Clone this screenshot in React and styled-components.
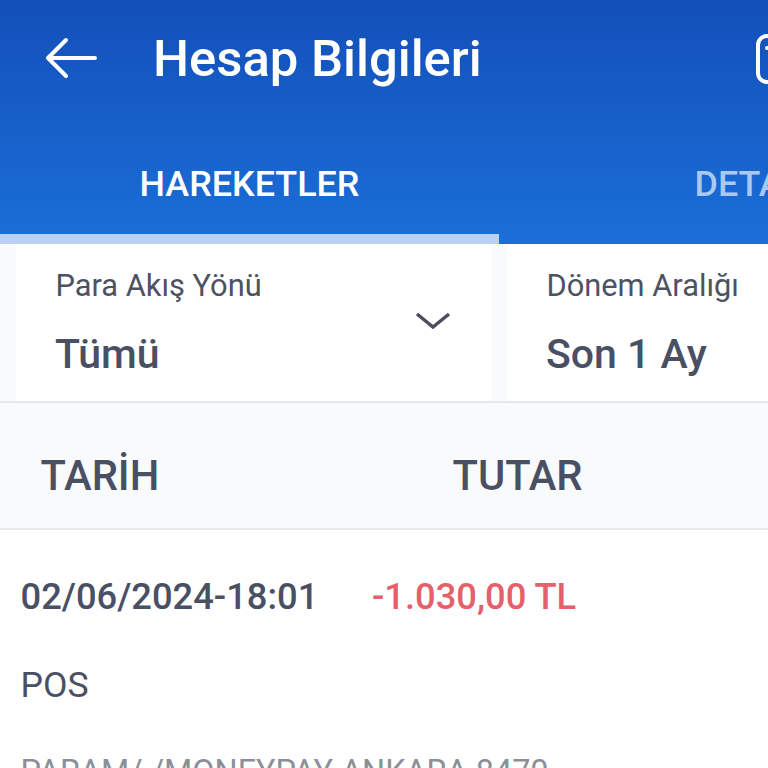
import React from 'react';
import styled, { createGlobalStyle } from 'styled-components';

const GlobalStyle = createGlobalStyle`
    html, body {
        margin: 0;
        padding: 0;
        width: 768px;
        height: 768px;
        overflow: hidden;
        background: #fff;
        font-family: Roboto, "Liberation Sans", sans-serif;
    }
`;

const Screen = styled.div`
    width: 768px;
    height: 768px;
    overflow: hidden;
`;

const Header = styled.header`
    width: 768px;
    height: 244px;
    background: linear-gradient(180deg, #134fb9 0%, #1b6fd8 100%);
    overflow: hidden;
`;

const Toolbar = styled.div`
    display: flex;
    align-items: center;
    height: 118px;
    padding-left: 45px;
    white-space: nowrap;
`;

const BackIcon = styled.svg`
    width: 54px;
    height: 44px;
    flex: none;
    margin-right: 54px;
`;

const Title = styled.h1`
    margin: 0 0 2px;
    width: 603px;
    flex: none;
    color: #fff;
    font-size: 50.8px;
    font-weight: 500;
`;

const ActionIcon = styled.svg`
    width: 40px;
    height: 50px;
    flex: none;
`;

const Tabs = styled.div`
    display: grid;
    grid-template-columns: 499px 499px;
    height: 126px;
`;

const Tab = styled.div`
    display: flex;
    justify-content: center;
    padding-top: 45px;
    box-sizing: border-box;
    color: ${({ $active }) => ($active ? '#fff' : '#a9c8f2')};
    border-bottom: 10px solid ${({ $active }) => ($active ? '#b9d1f5' : 'transparent')};
    font-size: 35.9px;
    font-weight: 500;
    white-space: nowrap;
`;

const Filters = styled.div`
    display: grid;
    grid-template-columns: 476px 300px;
    column-gap: 15px;
    height: 157px;
    padding-left: 16px;
    background: #f9fafc;
    border-bottom: 2px solid #e6e7e9;
`;

const Filter = styled.div`
    display: flex;
    align-items: center;
    justify-content: space-between;
    padding: 0 41px 0 40px;
    background: #fff;
`;

const FilterText = styled.div`
    display: flex;
    flex-direction: column;
`;

const FilterLabel = styled.span`
    color: #4d5262;
    font-size: 30.8px;
    line-height: 36px;
    white-space: nowrap;
    margin-left: -0.5px;
`;

const FilterValue = styled.span`
    margin: 27px 0 0 -1px;
    color: #4a5063;
    font-size: 41px;
    font-weight: 500;
    line-height: 46px;
    white-space: nowrap;
`;

const Chevron = styled.svg`
    width: 36px;
    height: 20px;
    flex: none;
    margin-top: -4px;
`;

const TableHead = styled.div`
    display: grid;
    grid-template-columns: 412px 1fr;
    align-items: center;
    height: 127px;
    box-sizing: border-box;
    padding: 20px 0 0 40.5px;
    background: #f9fafc;
    border-bottom: 2px solid #e6e7e9;
    color: #4a5063;
    font-size: 41.7px;
    font-weight: 500;
`;

const Movement = styled.div`
    display: flex;
    flex-direction: column;
    padding: 43px 20.5px 0;
`;

const MovementTop = styled.div`
    display: grid;
    grid-template-columns: 351.5px 1fr;
    font-size: 36.3px;
    font-weight: 500;
    line-height: 48px;
    white-space: nowrap;
`;

const MovementDate = styled.span`
    color: #4a5063;
`;

const Amount = styled.span`
    color: #e5606a;
`;

const MovementType = styled.div`
    margin-top: 40px;
    color: #4a5063;
    font-size: 35.6px;
    line-height: 48px;
`;

const MovementDetail = styled.div`
    margin-top: 39px;
    color: #8c8f99;
    font-size: 32.4px;
    line-height: 48px;
    white-space: nowrap;
`;

const App = () => (
    <Screen>
        <GlobalStyle />
        <Header>
            <Toolbar>
                <BackIcon viewBox="0 0 54 44" fill="none" stroke="#fff" strokeWidth="4" strokeLinecap="round" strokeLinejoin="round">
                    <path d="M3 21H50M21 3 3 21l18 18" />
                </BackIcon>
                <Title>Hesap Bilgileri</Title>
                <ActionIcon viewBox="0 0 40 50" fill="none" stroke="#fff" strokeWidth="4">
                    <rect x="2" y="2" width="50" height="46" rx="9" />
                    <circle cx="11" cy="14" r="2" fill="#fff" stroke="none" />
                </ActionIcon>
            </Toolbar>
            <Tabs>
                <Tab $active>HAREKETLER</Tab>
                <Tab>DETAY</Tab>
            </Tabs>
        </Header>
        <Filters>
            <Filter>
                <FilterText>
                    <FilterLabel>Para Akış Yönü</FilterLabel>
                    <FilterValue>Tümü</FilterValue>
                </FilterText>
                <Chevron viewBox="0 0 36 20" fill="none" stroke="#4a4f60" strokeWidth="3.5">
                    <path d="M2 3 18 16 34 3" />
                </Chevron>
            </Filter>
            <Filter>
                <FilterText>
                    <FilterLabel>Dönem Aralığı</FilterLabel>
                    <FilterValue>Son 1 Ay</FilterValue>
                </FilterText>
            </Filter>
        </Filters>
        <TableHead>
            <span>TARİH</span>
            <span>TUTAR</span>
        </TableHead>
        <Movement>
            <MovementTop>
                <MovementDate>02/06/2024-18:01</MovementDate>
                <Amount>-1.030,00 TL</Amount>
            </MovementTop>
            <MovementType>POS</MovementType>
            <MovementDetail>PARAM/ /MONEYPAY ANKARA 8470</MovementDetail>
        </Movement>
    </Screen>
);

export default App;
